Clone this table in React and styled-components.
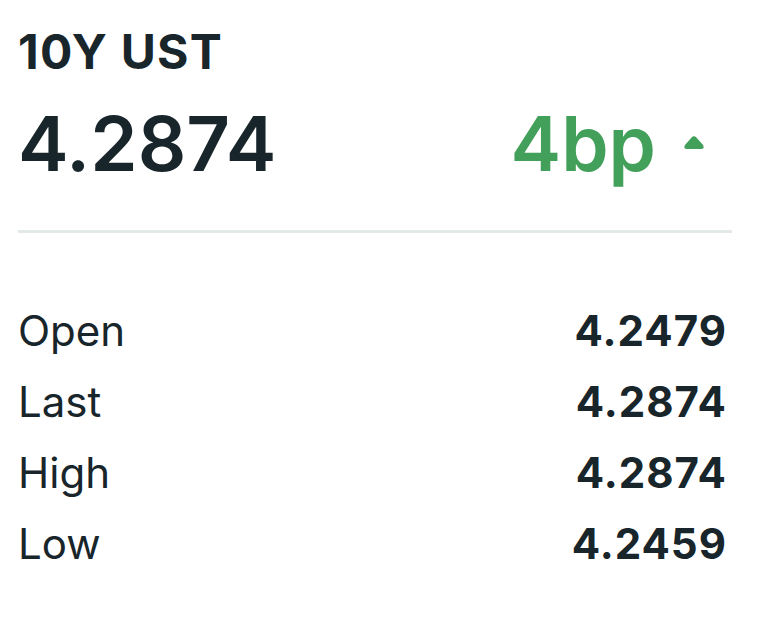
import styled, { createGlobalStyle } from "styled-components";

const GlobalStyle = createGlobalStyle`
  body {
    margin: 0;
    background: #ffffff;
    font-family: Inter, "Liberation Sans", sans-serif;
    color: #18252a;
  }
`;

const stats = [
  { label: "Open", value: "4.2479" },
  { label: "Last", value: "4.2874" },
  { label: "High", value: "4.2874" },
  { label: "Low", value: "4.2459" },
];

const App = () => {
  return (
    <>
      <GlobalStyle />
      <Card>
        <Title>10Y UST</Title>
        <PriceRow>
          <Price>4.2874</Price>
          <Change>
            4bp
            <Arrow viewBox="0 0 24 16">
              <path d="M9.6 2.6 Q12 0 14.4 2.6 L21 10 Q23 14 19 14 L5 14 Q1 14 3 10 Z" fill="#43a05a" />
            </Arrow>
          </Change>
        </PriceRow>
        <Divider />
        <Stats>
          {stats.map((s) => (
            <StatRow key={s.label}>
              <StatLabel>{s.label}</StatLabel>
              <StatValue>{s.value}</StatValue>
            </StatRow>
          ))}
        </Stats>
      </Card>
    </>
  );
};

export default App;

const Card = styled.div`
  padding: 24px 35px 0 18px;
  display: flex;
  flex-direction: column;
`;

const Title = styled.div`
  font-size: 48px;
  font-weight: 700;
  line-height: 56px;
  letter-spacing: 1.2px;
`;

const PriceRow = styled.div`
  display: flex;
  align-items: baseline;
  justify-content: space-between;
  margin-top: 18px;
`;

const Price = styled.div`
  font-size: 76px;
  font-weight: 600;
  line-height: 90px;
`;

const Change = styled.div`
  display: flex;
  align-items: baseline;
  gap: 26px;
  font-size: 76px;
  font-weight: 600;
  line-height: 90px;
  color: #43a05a;
  padding-right: 26px;
`;

const Arrow = styled.svg`
  width: 24px;
  height: 16px;
  align-self: center;
`;

const Divider = styled.div`
  height: 3px;
  background: #e3e9e7;
  margin-top: 42px;
`;

const Stats = styled.div`
  display: flex;
  flex-direction: column;
  margin-top: 78px;
  padding-right: 5px;
`;

const StatRow = styled.div`
  display: flex;
  justify-content: space-between;
  align-items: baseline;
  height: 71px;
`;

const StatLabel = styled.div`
  font-size: 42px;
  font-weight: 400;
  line-height: 40px;
`;

const StatValue = styled.div`
  font-size: 42px;
  font-weight: 700;
  line-height: 40px;
  letter-spacing: 1px;
`;
